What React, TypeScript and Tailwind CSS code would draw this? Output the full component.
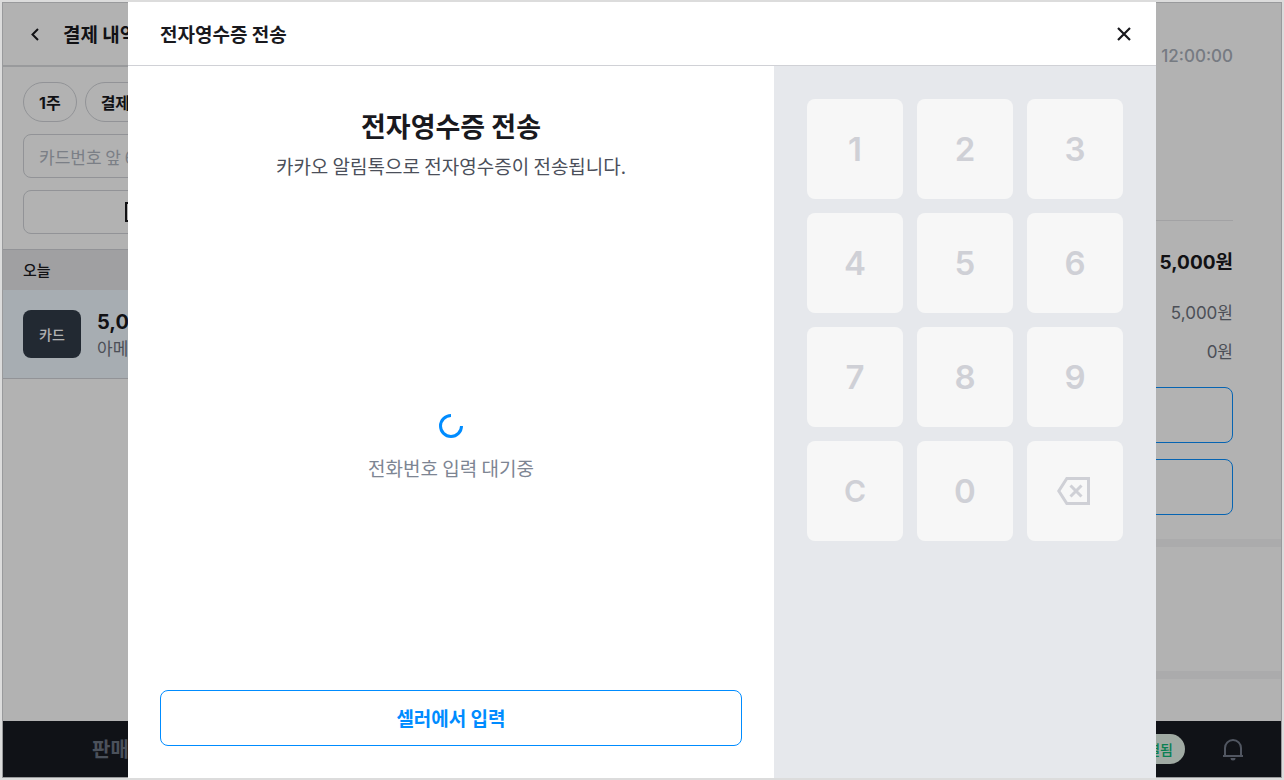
import React, { useState } from 'react';
import { clsx } from 'clsx';

const KEYS = ['1', '2', '3', '4', '5', '6', '7', '8', '9', 'C', '0', 'back'];

// Inter for digits, Hangul falls through to Noto
const numeric = "font-['Inter','Noto_Sans_CJK_KR',sans-serif]";

export default function App() {
  const [open, setOpen] = useState(true);

  return (
    <div className="relative h-screen min-h-[600px] overflow-hidden bg-[#dcdcdc] p-0.5 font-['Noto_Sans_CJK_KR',sans-serif] text-[#19191e]">
      <div className="flex h-full flex-col border border-[#dcdde0] bg-white" inert={open}>
        <div className="flex min-h-0 flex-1">
          <PaymentList />
          <PaymentDetail />
        </div>
        <BottomBar />
      </div>
      {open && <ReceiptDialog onClose={() => setOpen(false)} />}
    </div>
  );
}

function PaymentList() {
  return (
    <aside className="w-[356px] shrink-0 border-r border-[#dcdde0]">
      <header className="flex h-16 items-center gap-4 border-b-2 border-[#dcdde0] px-5">
        <button aria-label="뒤로" className="flex size-6 items-center justify-center">
          <svg viewBox="0 0 24 24" className="size-6" fill="none" stroke="currentColor" strokeWidth="2">
            <path d="M15 7 9.5 12.5 15 18" />
          </svg>
        </button>
        <h2 className="text-[19px] leading-6 font-bold">결제 내역</h2>
      </header>

      <div className="flex flex-col gap-3 px-5 py-[15px]">
        <div className="flex gap-2">
          <Chip label="1주" />
          <Chip label="결제수단" />
        </div>
        <input
          aria-label="카드번호"
          placeholder="카드번호 앞 6자리"
          className="h-11 w-full rounded-lg border border-[#d1d3d8] px-[15px] text-[17px] placeholder:text-[#b0b6c1]"
        />
        <button className="flex h-11 items-center justify-center gap-2 rounded-lg border border-[#d1d3d8] text-[17px] font-medium">
          <svg viewBox="0 0 20 20" className="size-5" fill="none" stroke="currentColor" strokeWidth="2">
            <path d="M1 1h18v18H1z" />
          </svg>
          영수증 조회
        </button>
      </div>

      <h3 className="flex h-[41px] items-center border-t border-[#d1d3d8] bg-[#e5e5e9] px-5 text-[15px] leading-5 font-medium">오늘</h3>
      <a href="#payment" className="flex gap-4 border-b border-[#d1d3d8] bg-[#f0f8ff] p-5">
        <span className="flex h-12 w-[58px] items-center justify-center rounded-lg bg-[#313b48] text-[14px] leading-5 font-medium text-white">카드</span>
        <span className="-my-0.5 flex flex-col">
          <span className={clsx(numeric, 'text-[20px] leading-7 font-bold')}>5,000원</span>
          <span className="text-[17px] leading-6 text-[#6d727d]">아메리카노</span>
        </span>
      </a>
    </aside>
  );
}

function PaymentDetail() {
  return (
    <main className={clsx(numeric, 'min-w-0 flex-1')}>
      <div className="px-12 pb-6">
        <div className="h-[218px] border-b border-[#e8e8eb] pt-[41px] text-right text-[17px] leading-6 font-medium text-[#aab0ba]">12:00:00</div>
        <p className="mt-[30px] text-right text-[19px] leading-6 font-bold">5,000원</p>
        <p className="mt-[26px] text-right text-[17px] leading-6 text-[#6d727d]">5,000원</p>
        <p className="mt-[15px] text-right text-[17px] leading-6 text-[#6d727d]">0원</p>
        <div className="mt-[23px] flex flex-col gap-4">
          <button aria-label="영수증 출력" className="h-14 rounded-lg border border-[#0a90ff]" />
          <button aria-label="결제 취소" className="h-14 rounded-lg border border-[#0a90ff]" />
        </div>
      </div>
      <div className="h-2 bg-[#f5f5f7]" />
      <div className="h-[124px]" />
      <div className="h-2 bg-[#f5f5f7]" />
    </main>
  );
}

function BottomBar() {
  return (
    <footer className="flex h-14 shrink-0 items-center justify-between bg-[#181b22] pr-9 pl-[89px]">
      <button className="text-[20px] leading-7 font-bold text-[#6c7483]">판매</button>
      <div className="flex items-center gap-9">
        <span className="rounded-full bg-[#e6f4ea] px-3 text-[14px] leading-[30px] font-medium text-[#0fb877]">연결됨</span>
        <button aria-label="알림">
          <svg viewBox="0 0 24 24" className="size-6" fill="none" stroke="#747c8b" strokeWidth="2">
            <path d="M4 19v-8a8 8 0 0 1 16 0v8" />
            <path d="M2 19h20" />
            <path d="M9.5 21h5a2.5 2.5 0 0 1-5 0z" fill="#747c8b" stroke="none" />
          </svg>
        </button>
      </div>
    </footer>
  );
}

function ReceiptDialog({ onClose }: { onClose: () => void }) {
  return (
    <div className="absolute inset-0.5 flex justify-center bg-black/30 px-[126px]">
      <section role="dialog" aria-modal="true" aria-labelledby="dialog-title" className="flex w-full flex-col bg-white">
        <header className="flex h-16 shrink-0 items-center justify-between border-b border-[#d0d1d6] pr-5 pl-8">
          <h1 id="dialog-title" className="text-[19px] leading-6 font-bold">전자영수증 전송</h1>
          <button aria-label="닫기" onClick={onClose} className="flex size-6 items-center justify-center">
            <svg viewBox="0 0 24 24" className="size-6" fill="none" stroke="currentColor" strokeWidth="2.2">
              <path d="M6 6l12 12M18 6 6 18" />
            </svg>
          </button>
        </header>

        <div className="flex min-h-0 flex-1">
          <div className="flex min-w-0 flex-1 flex-col px-8 pt-10 pb-8 text-center">
            <h2 className="text-[27px] leading-10 font-bold">전자영수증 전송</h2>
            <p className="text-[19px] leading-10 text-[#4b4f5a]">카카오 알림톡으로 전자영수증이 전송됩니다.</p>
            <div role="status" className="mt-5 flex flex-1 flex-col items-center justify-center gap-4">
              <svg viewBox="0 0 24 24" className="size-6" fill="none" stroke="#008cff" strokeWidth="3">
                <path d="M12 1.5A10.5 10.5 0 1 0 22.5 12" />
              </svg>
              <p className="text-[19px] leading-7 text-[#7d8593]">전화번호 입력 대기중</p>
            </div>
            <button className="h-14 rounded-lg border border-[#008cff] text-[19px] leading-7 font-bold text-[#008cff]">셀러에서 입력</button>
          </div>
          <Keypad />
        </div>
      </section>
    </div>
  );
}

function Keypad() {
  return (
    <div className="w-[382px] shrink-0 bg-[#e6e8ec] p-[33px]">
      <div className={clsx(numeric, 'grid grid-cols-3 gap-[14px]')}>
        {KEYS.map((key) => (
          <button
            key={key}
            disabled
            aria-label={key === 'back' ? '지우기' : undefined}
            className={clsx(
              'flex h-[100px] items-center justify-center rounded-lg bg-[#f7f7f7] font-semibold text-[#cfd0d6]',
              key === 'C' ? 'text-[30px]' : 'text-[33px]',
              key !== 'back' && key !== 'C' && 'pt-0.5',
            )}
          >
            {key === 'back' ? (
              <svg viewBox="0 0 36 36" className="size-9" fill="none" stroke="currentColor" strokeWidth="3">
                <path d="M9.8 5.5H31.5v25H9.8L1.8 18z" />
                <path d="M13.5 12.5l11 11M24.5 12.5l-11 11" />
              </svg>
            ) : (
              key
            )}
          </button>
        ))}
      </div>
    </div>
  );
}

function Chip({ label }: { label: string }) {
  return (
    <button className={clsx(numeric, 'h-10 rounded-full border border-[#d1d3d8] px-[15px] pt-0.5 text-[16px] leading-6 font-bold')}>{label}</button>
  );
}
